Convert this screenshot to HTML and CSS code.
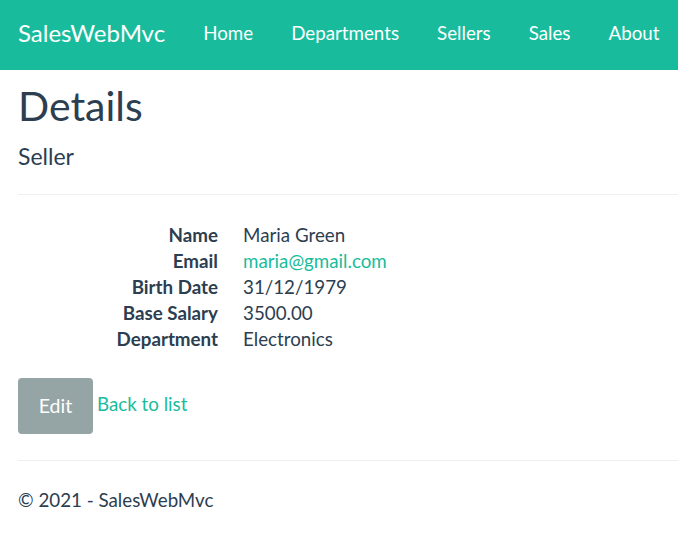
FILE: index.html
```html
<!DOCTYPE html>
<html>
<head>
<meta charset="utf-8">
<link rel="stylesheet" href="styles.css">
</head>
<body>
<nav class="navbar">
  <a class="brand" href="#">SalesWebMvc</a>
  <ul class="nav">
    <li><a href="#">Home</a></li>
    <li><a href="#">Departments</a></li>
    <li><a href="#">Sellers</a></li>
    <li><a href="#">Sales</a></li>
    <li><a href="#">About</a></li>
  </ul>
</nav>
<div class="container">
  <h1 class="title">Details</h1>
  <div>
    <h4 class="subtitle">Seller</h4>
    <hr class="rule">
    <dl class="details">
      <dt>Name</dt><dd>Maria Green</dd>
      <dt>Email</dt><dd><a href="#">maria@gmail.com</a></dd>
      <dt>Birth Date</dt><dd>31/12/1979</dd>
      <dt>Base Salary</dt><dd>3500.00</dd>
      <dt>Department</dt><dd>Electronics</dd>
    </dl>
  </div>
  <div class="actions">
    <a class="btn" href="#">Edit</a><a class="link" href="#">Back to list</a>
  </div>
  <hr class="rule footer-rule">
  <footer class="footer">
    <p>&copy; 2021 - SalesWebMvc</p>
  </footer>
</div>
</body>
</html>
```
FILE: styles.css
```css
* { box-sizing: border-box; }
html, body { margin: 0; padding: 0; }
body {
  font-family: Lato, "Noto Sans", sans-serif;
  font-size: 18.75px;
  line-height: 26px;
  color: #2c3e50;
  background: #fff;
  overflow-x: hidden;
}
a { color: #18bc9c; text-decoration: none; }

.navbar {
  background: #18bc9c;
  height: 70px;
  display: flex;
  align-items: center;
  padding: 0 18px;
}
.brand {
  color: #fff;
  font-size: 24px;
  margin-right: 19px;
  position: relative;
  top: -2px;
  white-space: nowrap;
}
.nav {
  list-style: none;
  margin: 0;
  padding: 0;
  display: flex;
  white-space: nowrap;
}
.nav a {
  color: #fff;
  font-size: 18.75px;
  padding: 0 19px;
  display: block;
  position: relative;
  top: -2px;
}

.container { padding: 0 0 0 18px; }
.title {
  font-size: 41px;
  font-weight: 400;
  line-height: 48px;
  margin: 12px 0 0 0;
}
.subtitle {
  font-size: 23px;
  font-weight: 400;
  line-height: 28px;
  margin: 12px 0 0 0;
}
.rule {
  border: 0;
  border-top: 1px solid #ecf0f1;
  margin: 24px 0 0 0;
  height: 0;
}
.details {
  margin: 27px 0 0 0;
  display: grid;
  grid-template-columns: 200px 1fr;
  column-gap: 25px;
}
.details dt { font-weight: 700; text-align: right; }
.details dd { margin: 0; }

.actions { margin-top: 26px; }
.btn {
  display: inline-block;
  vertical-align: middle;
  background: #95a5a6;
  color: #fff;
  width: 75px;
  height: 56px;
  line-height: 56px;
  font-size: 19.5px;
  text-align: center;
  border-radius: 4px;
}
.link { margin-left: 4px; vertical-align: middle; position: relative; top: -2px; }

.footer-rule { margin-top: 26px; }
.footer p { margin: 26px 0 0 0; }
```
